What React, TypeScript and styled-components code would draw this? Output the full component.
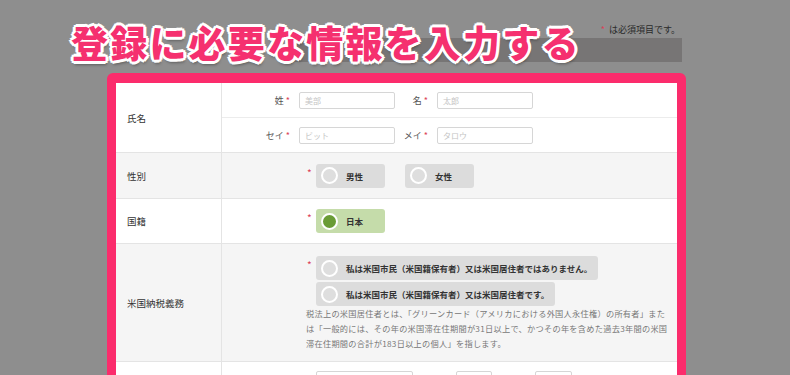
import React from "react";
import styled, { createGlobalStyle } from "styled-components";

const GlobalStyle = createGlobalStyle`
  html, body {
    margin: 0;
    padding: 0;
    background: #8e8e8e;
    font-family: "Noto Sans CJK JP", "Noto Sans", sans-serif;
  }
`;

const Page = styled.div`
  position: relative;
  width: 790px;
  height: 375px;
  overflow: hidden;
`;

const Header = styled.div`
  width: 574px;
  margin-left: 108px;
  padding-top: 24px;
`;

const Required = styled.div`
  text-align: right;
  padding-right: 2px;
  font-size: 9px;
  line-height: 12px;
  color: #2a2a2a;
`;

const Star = styled.span`
  color: #dc3f58;
  margin-right: 2px;
`;

const Band = styled.div`
  height: 24px;
  margin: 2px 0 0 182px;
  background: #777575;
`;

const Frame = styled.div`
  width: 561px;
  margin: 11px 0 0 107px;
  border: 9px solid #fb2c6c;
  border-top-width: 10px;
  border-radius: 6px;
  background: #fff;
`;

const Row = styled.div<{ $shade?: boolean; $h: number }>`
  display: grid;
  grid-template-columns: 106px 1fr;
  min-height: ${({ $h }) => $h}px;
  background: ${({ $shade }) => ($shade ? "#f5f5f5" : "#fff")};
  border-bottom: 1px solid #e4e4e4;
`;

const Label = styled.div`
  display: flex;
  align-items: center;
  padding-left: 11px;
  font-size: 9.5px;
  color: #333;
  border-right: 1px solid #e4e4e4;
`;

const Cell = styled.div<{ $pt?: number }>`
  display: flex;
  flex-direction: column;
  justify-content: ${({ $pt }) => ($pt ? "flex-start" : "center")};
  padding-top: ${({ $pt }) => $pt ?? 0}px;
`;

const SubRow = styled.div<{ $line?: boolean }>`
  display: flex;
  align-items: center;
  height: 34px;
  border-bottom: ${({ $line }) => ($line ? "1px solid #ececec" : "none")};
`;

const FieldName = styled.div<{ $w: number }>`
  width: ${({ $w }) => $w}px;
  text-align: right;
  font-size: 9px;
  color: #555;
  margin-right: 7px;
`;

const Input = styled.div<{ $w: number }>`
  width: ${({ $w }) => $w}px;
  height: 17px;
  box-sizing: border-box;
  border: 1px solid #d6d6d6;
  border-radius: 2px;
  background: #fff;
  padding-left: 5px;
  font-size: 8px;
  line-height: 15px;
  color: #c4c4c4;
`;

const Choices = styled.div`
  display: flex;
  align-items: flex-start;
  margin-left: 85px;
`;

const Mark = styled.span`
  color: #dc3f58;
  font-size: 10px;
  line-height: 18px;
  width: 9px;
`;

const Options = styled.div<{ $dir?: string }>`
  display: flex;
  flex-direction: ${({ $dir }) => $dir ?? "row"};
  align-items: flex-start;
  gap: ${({ $dir }) => ($dir === "column" ? 2 : 20)}px;
`;

const Option = styled.div<{ $on?: boolean; $w?: number }>`
  display: inline-flex;
  align-items: center;
  height: 24px;
  width: ${({ $w }) => ($w ? `${$w}px` : "auto")};
  box-sizing: border-box;
  padding: 0 6px 0 5px;
  border-radius: 3px;
  background: ${({ $on }) => ($on ? "#c5dcaa" : "#dcdcdc")};
  font-size: 8.5px;
  font-weight: 700;
  color: #333;
  white-space: nowrap;
`;

const Dot = styled.span<{ $on?: boolean }>`
  width: 13px;
  height: 13px;
  border: 2px solid #fff;
  border-radius: 50%;
  background: ${({ $on }) => ($on ? "#6a9c36" : "#dedede")};
  margin-right: 8px;
  flex: none;
`;

const Note = styled.p`
  margin: 0 0 0 84px;
  font-size: 8.2px;
  letter-spacing: 0.28px;
  line-height: 15px;
  color: #777;
  white-space: nowrap;
`;

const Inputs = styled.div`
  display: flex;
  gap: 43px;
  padding-top: 8px;
  margin-left: 94px;
`;

const Title = styled.h1`
  position: absolute;
  left: 71px;
  top: 21px;
  margin: 0;
  font-size: 37px;
  line-height: 42px;
  font-weight: 900;
  letter-spacing: 2.2px;
  color: #f5306f;
  white-space: nowrap;
  text-shadow:
    2px 0 0 #fff, -2px 0 0 #fff, 0 2px 0 #fff, 0 -2px 0 #fff,
    2px 2px 0 #fff, -2px -2px 0 #fff, 2px -2px 0 #fff, -2px 2px 0 #fff,
    3px 0 0 #fff, -3px 0 0 #fff, 0 3px 0 #fff, 0 -3px 0 #fff,
    1px 4px 3px rgba(0, 0, 0, 0.35);
`;

const App: React.FC = () => {
  return (
    <Page>
      <GlobalStyle />
      <Header>
        <Required>
          <Star>*</Star> は必須項目です。
        </Required>
        <Band />
      </Header>
      <Frame>
        <Row $h={69}>
          <Label>氏名</Label>
          <Cell>
            <SubRow $line>
              <FieldName $w={70}>
                姓<Star> *</Star>
              </FieldName>
              <Input $w={96}>美部</Input>
              <FieldName $w={35}>
                名<Star> *</Star>
              </FieldName>
              <Input $w={96}>太郎</Input>
            </SubRow>
            <SubRow>
              <FieldName $w={70}>
                セイ<Star> *</Star>
              </FieldName>
              <Input $w={96}>ビット</Input>
              <FieldName $w={35}>
                メイ<Star> *</Star>
              </FieldName>
              <Input $w={96}>タロウ</Input>
            </SubRow>
          </Cell>
        </Row>
        <Row $h={45} $shade>
          <Label>性別</Label>
          <Cell>
            <Choices>
              <Mark>*</Mark>
              <Options>
                <Option $w={69}>
                  <Dot />
                  男性
                </Option>
                <Option $w={69}>
                  <Dot />
                  女性
                </Option>
              </Options>
            </Choices>
          </Cell>
        </Row>
        <Row $h={44}>
          <Label>国籍</Label>
          <Cell>
            <Choices>
              <Mark>*</Mark>
              <Options>
                <Option $w={69} $on>
                  <Dot $on />
                  日本
                </Option>
              </Options>
            </Choices>
          </Cell>
        </Row>
        <Row $h={117} $shade>
          <Label>米国納税義務</Label>
          <Cell $pt={12}>
            <Choices>
              <Mark>*</Mark>
              <Options $dir="column">
                <Option>
                  <Dot />
                  私は米国市民（米国籍保有者）又は米国居住者ではありません。
                </Option>
                <Option>
                  <Dot />
                  私は米国市民（米国籍保有者）又は米国居住者です。
                </Option>
              </Options>
            </Choices>
            <Note>
              税法上の米国居住者とは、「グリーンカード（アメリカにおける外国人永住権）の所有者」また
              <br />
              は「一般的には、その年の米国滞在住期間が31日以上で、かつその年を含めた過去3年間の米国
              <br />
              滞在住期間の合計が183日以上の個人」を指します。
            </Note>
          </Cell>
        </Row>
        <Row $h={40}>
          <Label />
          <Cell $pt={1}>
            <Inputs>
              <Input $w={97} />
              <Input $w={36} />
              <Input $w={37} />
            </Inputs>
          </Cell>
        </Row>
      </Frame>
      <Title>登録に必要な情報を入力する</Title>
    </Page>
  );
};

export default App;
